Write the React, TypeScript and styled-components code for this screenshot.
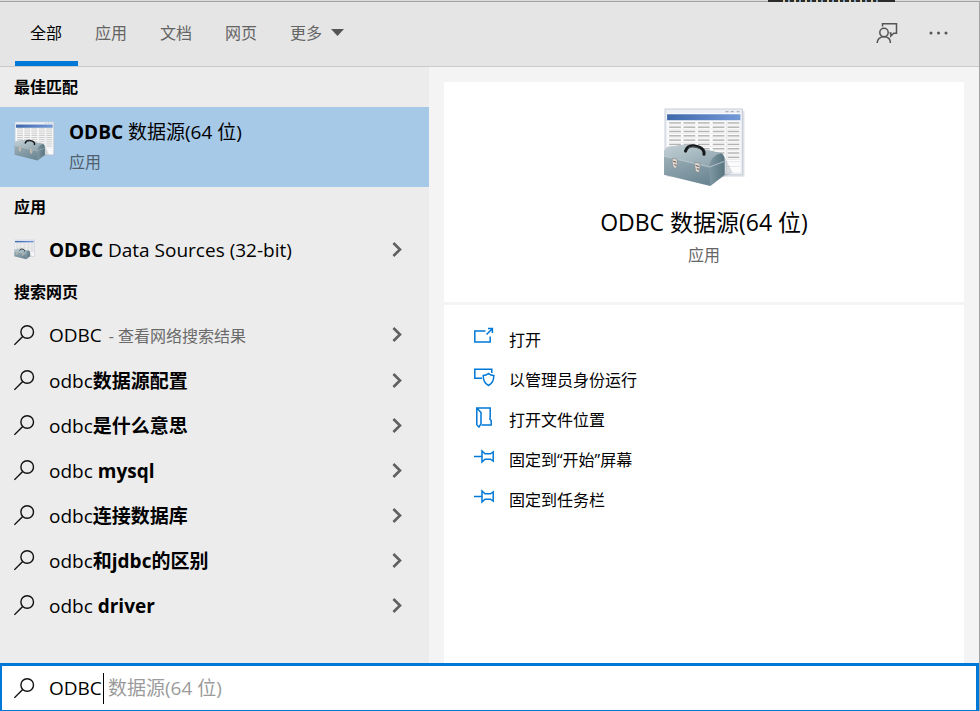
import React, { useId } from 'react';
import styled, { createGlobalStyle, css } from 'styled-components';

const accent = '#0078d7';

const GlobalStyle = createGlobalStyle`
  *, *::before, *::after { box-sizing: border-box; }
  body {
    margin: 0;
    background: #e6e6e6;
    color: #000;
    font-family: "Open Sans", "Noto Sans CJK SC", sans-serif;
    font-size: 16px;
    line-height: 24px;
  }
  button, input { font: inherit; color: inherit; }
  button { border: 0; padding: 0; background: none; text-align: left; cursor: pointer; }
  svg { display: block; flex: none; }
`;

const Shell = styled.div`
  display: flex;
  flex-direction: column;
  min-height: 100vh;
`;

const WindowBehind = styled.div`
  height: 1px;
  display: flex;
  justify-content: flex-end;
  padding-right: 85px;
  background: #dcdcdc;
`;

const BehindLabel = styled.span`
  width: 127px;
  height: 2px;
  position: relative;
  background:
    linear-gradient(90deg, #2b2b2b 0 15px, transparent 15px 112px, #2b2b2b 112px),
    repeating-linear-gradient(90deg, #2b2b2b 0 4px, #d8c9a0 4px 6px, #2b2b2b 6px 9px, #7fa4c4 9px 11px);
`;

const Panel = styled.main`
  flex: 1;
  display: flex;
  flex-direction: column;
  border-top: 1px solid #a2a2a2;
  border-right: 1px solid #a2a2a2;
`;

const Header = styled.header`
  display: flex;
  justify-content: space-between;
  height: 65px;
  padding: 0 31px 0 15px;
  background: #e5e5e5;
  border-bottom: 1px solid #cacaca;
`;

const Tabs = styled.nav`
  display: flex;
  gap: 2px;
`;

const Tab = styled.button<{ $active?: boolean }>`
  display: flex;
  align-items: center;
  gap: 9px;
  padding: 2px 16px 0 15px;
  border-bottom: 5px solid ${p => (p.$active ? accent : 'transparent')};
  color: ${p => (p.$active ? '#000' : '#646464')};
`;

const Tools = styled.div`
  display: flex;
  align-items: center;
  gap: 30px;
  padding-bottom: 2px;
  color: #555;
`;

const Body = styled.div`
  flex: 1;
  display: grid;
  grid-template-columns: 429px minmax(0, 1fr);
`;

const Results = styled.section`
  background: #ececec;
`;

const GroupTitle = styled.h2`
  margin: 0;
  padding: 8px 14px;
  font-size: 16px;
  line-height: 24px;
  font-weight: 700;
`;

const BestMatch = styled.button`
  display: flex;
  width: 100%;
  height: 80px;
  gap: 14px;
  padding: 12px 14px;
  background: #a6c9e8;

  svg { margin-top: 2px; }
`;

const BestText = styled.span`
  display: flex;
  flex-direction: column;
  gap: 5px;
  font-size: 19px;
  line-height: 26px;
`;

const Caption = styled.span`
  font-size: 16px;
  line-height: 24px;
  color: #4f5f6e;
`;

const Row = styled.button<{ $lead?: boolean }>`
  display: flex;
  align-items: center;
  width: 100%;
  height: ${p => (p.$lead ? 46 : 45)}px;
  gap: 14px;
  padding: 0 26px 0 14px;
  font-size: 19px;
`;

const RowText = styled.span`
  flex: 1;
  white-space: nowrap;
`;

const Hint = styled.span`
  margin-left: 2px;
  font-size: 16px;
  color: #6a6a6a;
`;

const Detail = styled.section`
  display: flex;
  flex-direction: column;
  gap: 3px;
  padding: 15px 15px 0;
  background: #f4f4f4;
`;

const card = css`
  background: #fff;
`;

const Hero = styled.div`
  ${card}
  display: flex;
  flex-direction: column;
  align-items: center;
  height: 220px;
  padding-top: 25px;
`;

const HeroTitle = styled.h1`
  margin: 16px 0 0;
  font-size: 23px;
  line-height: 34px;
  font-weight: 400;
`;

const HeroCaption = styled.span`
  margin-top: 4px;
  color: #666;
`;

const Actions = styled.div`
  ${card}
  flex: 1;
  padding: 15px 30px;
`;

const Action = styled.button`
  display: flex;
  align-items: center;
  gap: 14px;
  width: 100%;
  height: 40px;

  svg { margin-bottom: 6px; }
`;

const SearchBar = styled.label`
  display: flex;
  align-items: center;
  gap: 14px;
  height: 48px;
  padding: 0 12px;
  background: #fff;
  border: solid ${accent};
  border-width: 3px 3px 1px 2px;
  font-size: 19px;
`;

const Field = styled.span`
  flex: 1;
  display: flex;
  align-items: center;
`;

const Query = styled.input`
  width: 55px;
  height: 31px;
  padding: 0;
  border: 0;
  border-right: 1px solid #000;
  outline: 0;
  background: none;
`;

const Completion = styled.span`
  margin-left: 4px;
  color: #9b9b9b;
`;

const gridRows = Array.from({ length: 9 }, (_, i) => 15.5 + i * 4.2);
const gridColumns = [6, 20, 34, 48.5, 63];

function ToolboxIcon({ size }: { size: number }) {
  const id = useId();
  return (
    <svg width={size} height={size} viewBox="0 0 80 80" aria-hidden="true">
      <defs>
        <linearGradient id={`${id}-bar`} x1="0" x2="1">
          <stop offset="0" stopColor="#3f69ab" />
          <stop offset="1" stopColor="#7398d6" />
        </linearGradient>
        <linearGradient id={`${id}-front`} x1="0" y1="0" x2="0.5" y2="1">
          <stop offset="0" stopColor="#a9bac1" />
          <stop offset="1" stopColor="#6d8894" />
        </linearGradient>
        <linearGradient id={`${id}-top`} x1="0" y1="0" x2="1" y2="1">
          <stop offset="0" stopColor="#c3d0d5" />
          <stop offset="1" stopColor="#8aa1ab" />
        </linearGradient>
        <linearGradient id={`${id}-side`} x1="0" x2="1">
          <stop offset="0" stopColor="#8198a3" />
          <stop offset="1" stopColor="#58757f" />
        </linearGradient>
      </defs>
      <path d="M4 4h75.500v64H4z" fill="#a9b4c4" opacity=".4" />
      <path d="M2 2h75.500v64H2z" fill="#eceff5" stroke="#c9ced8" />
      <path d="M4 6h71.500v58H4z" fill="#fcfcfd" />
      <path d="M4 7h71.500v6H4z" fill={`url(#${id}-bar)`} />
      <path d="M61 4.500h3m2 0h3m3 0h2.500" stroke="#a9afb8" />
      {gridRows.map(y => (
        <g key={y}>
          {gridColumns.map(x => (
            <path key={x} d={`M${x} ${y}h11.500`} stroke="#b3b3b3" strokeWidth="1.400" />
          ))}
          <path d={`M5 ${y + 2}h70`} stroke="#ececec" strokeWidth="1" />
        </g>
      ))}
      <path d="M5 53.500h70M5 58h70M62 14v50" stroke="#e6e8ec" />
      <path d="M59 47l9 17-20 10z" fill="#6b7b83" opacity=".25" />
      <path d="M1 44q1-4 4-5l14-2 38 8q3 2 3 7v14L46 77 1 66z" fill={`url(#${id}-front)`} />
      <path d="M1 44q1-4 4-5l16-2.500 36 8.500q-9 2-12 13L1 48z" fill={`url(#${id}-top)`} />
      <path d="M45 58q2-11 12-13 3 2 3 7v14L46 77z" fill={`url(#${id}-side)`} />
      <path d="M1 48l44.500 10.500L60 53" fill="none" stroke="#c3cfd4" strokeWidth=".8" />
      <path d="M22 43q2-6 9-5 8 1 9 6v2" fill="none" stroke="#161a1c" strokeWidth="3" strokeLinecap="round" />
      <path d="M25 39.500q5-2 11 1" fill="none" stroke="#5d6468" strokeWidth=".8" />
      {[[9, 50], [31, 54]].map(([x, y]) => (
        <g key={x}>
          <path d={`M${x} ${y}l5 1v4l-1 5-3-1-1-5z`} fill="#dedcd8" stroke="#84898b" strokeWidth=".7" />
          <path d={`M${x + 1} ${y + 3}l3 1m-2 2l2 1`} stroke="#77594d" />
        </g>
      ))}
    </svg>
  );
}

function Icon({ children, color = 'currentColor', width = 1.5 }: { children: React.ReactNode; color?: string; width?: number }) {
  return (
    <svg width="21" height="21" viewBox="0 0 21 21" fill="none" stroke={color} strokeWidth={width} aria-hidden="true">
      {children}
    </svg>
  );
}

const SearchIcon = () => (
  <Icon color="#111" width={1.4}>
    <circle cx="13.2" cy="7" r="6.3" />
    <path d="M8.7 11.6L.4 19.800" />
  </Icon>
);

const Chevron = () => (
  <svg width="11" height="16" viewBox="0 0 11 16" fill="none" stroke="#606060" strokeWidth="2.6" aria-hidden="true">
    <path d="M1.400 1L8 7.500 1.400 14" />
  </svg>
);

const OpenIcon = () => (
  <Icon color={accent}>
    <path d="M11.500 4H.8v11h15.400V9.500M12.500 7.500L18 2M14 1.600h4.400V6" />
  </Icon>
);

const AdminIcon = () => (
  <Icon color={accent}>
    <path d="M8 11.200H.8V2.300h17V6M14.500 6.500q2.300 2 5.300 2 0 7.500-5.300 10Q9.200 16 9.200 8.500q3 0 5.300-2z" />
  </Icon>
);

const LocationIcon = () => (
  <Icon color={accent}>
    <path d="M2.800 18V1h13.400v9l-.4 2 1.400 1.500V18H7.500M3 1.300l4 4.200v11L5 20l-2.200-2" />
  </Icon>
);

const PinIcon = () => (
  <Icon color={accent}>
    <path d="M0 9.500h8M8 4v11l3-2.800h5.500l2.700 1.800V5l-2.700 1.800H11z" />
  </Icon>
);

const FeedbackIcon = () => (
  <svg width="22" height="22" viewBox="0 0 22 22" fill="none" stroke="currentColor" strokeWidth="1.500" aria-hidden="true">
    <circle cx="8" cy="10.500" r="4.200" />
    <path d="M1.200 21c0-4 3-6.300 6.800-6.300s6.400 2.300 6.400 6.300M6.500 4.500V1.700h14v9.500h-2.700l-3 2.800v-3H13.500" />
  </svg>
);

const MoreIcon = () => (
  <svg width="20" height="6" viewBox="0 0 20 6" fill="currentColor" aria-hidden="true">
    <circle cx="3" cy="3" r="1.500" />
    <circle cx="10.500" cy="3" r="1.500" />
    <circle cx="18" cy="3" r="1.500" />
  </svg>
);

const suggestions = [
  ['odbc', '数据源配置'],
  ['odbc', '是什么意思'],
  ['odbc ', 'mysql'],
  ['odbc', '连接数据库'],
  ['odbc', '和jdbc的区别'],
  ['odbc ', 'driver'],
];

const actions = [
  { label: '打开', icon: <OpenIcon /> },
  { label: '以管理员身份运行', icon: <AdminIcon /> },
  { label: '打开文件位置', icon: <LocationIcon /> },
  { label: '固定到“开始”屏幕', icon: <PinIcon /> },
  { label: '固定到任务栏', icon: <PinIcon /> },
];

export default function App() {
  return (
    <>
      <GlobalStyle />
      <Shell>
        <WindowBehind><BehindLabel /></WindowBehind>
        <Panel>
          <Header>
            <Tabs>
              <Tab $active>全部</Tab>
              <Tab>应用</Tab>
              <Tab>文档</Tab>
              <Tab>网页</Tab>
              <Tab>
                更多
                <svg width="13" height="7" viewBox="0 0 13 7" aria-hidden="true"><path d="M0 0h13L6.500 7z" fill="#555" /></svg>
              </Tab>
            </Tabs>
            <Tools>
              <button aria-label="反馈"><FeedbackIcon /></button>
              <button aria-label="选项"><MoreIcon /></button>
            </Tools>
          </Header>
          <Body>
            <Results>
              <GroupTitle>最佳匹配</GroupTitle>
              <BestMatch>
                <ToolboxIcon size={41} />
                <BestText>
                  <span><b>ODBC</b> 数据源(64 位)</span>
                  <Caption>应用</Caption>
                </BestText>
              </BestMatch>
              <GroupTitle>应用</GroupTitle>
              <Row>
                <ToolboxIcon size={21} />
                <RowText><b>ODBC</b> Data Sources (32-bit)</RowText>
                <Chevron />
              </Row>
              <GroupTitle>搜索网页</GroupTitle>
              <Row $lead>
                <SearchIcon />
                <RowText>ODBC <Hint>- 查看网络搜索结果</Hint></RowText>
                <Chevron />
              </Row>
              {suggestions.map(([typed, rest]) => (
                <Row key={rest}>
                  <SearchIcon />
                  <RowText>{typed}<b>{rest}</b></RowText>
                  <Chevron />
                </Row>
              ))}
            </Results>
            <Detail>
              <Hero>
                <ToolboxIcon size={82} />
                <HeroTitle>ODBC 数据源(64 位)</HeroTitle>
                <HeroCaption>应用</HeroCaption>
              </Hero>
              <Actions>
                {actions.map(a => (
                  <Action key={a.label}>{a.icon}{a.label}</Action>
                ))}
              </Actions>
            </Detail>
          </Body>
          <SearchBar>
            <SearchIcon />
            <Field>
              <Query type="text" defaultValue="ODBC" aria-label="搜索" />
              <Completion>数据源(64 位)</Completion>
            </Field>
          </SearchBar>
        </Panel>
      </Shell>
    </>
  );
}
